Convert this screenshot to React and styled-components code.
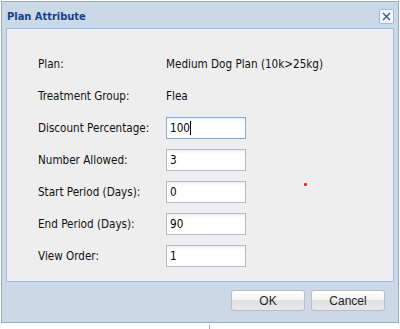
import React from 'react';
import styled, { createGlobalStyle } from 'styled-components';

const Global = createGlobalStyle`
  html, body { margin: 0; padding: 0; background: #ffffff; }
  body { font-family: "DejaVu Sans Condensed", "DejaVu Sans", sans-serif; }
`;

const Window = styled.div`
  position: relative;
  margin: 1px 0 0 1px;
  width: 398px;
  height: 322px;
  box-sizing: border-box;
  border: 1px solid #99a9c4;
  background: #cbd8e7;
  display: flex;
  flex-direction: column;
`;

const Header = styled.div`
  height: 26px;
  display: flex;
  align-items: center;
  justify-content: space-between;
  padding: 0 4px 0 5px;
`;

const Title = styled.div`
  font-weight: bold;
  font-size: 11px;
  color: #15428b;
  margin-top: 2px;
`;

const CloseButton = styled.div`
  width: 15px;
  height: 15px;
  box-sizing: border-box;
  border: 1px solid #99bbe8;
  border-radius: 2px;
  background: #f4f7fb;
  display: flex;
  align-items: center;
  justify-content: center;
  margin-top: 3px;
`;

const Frame = styled.div`
  padding: 0 4px;
`;

const Panel = styled.div`
  height: 254px;
  box-sizing: border-box;
  border: 1px solid #99bbe8;
  background: #eeeeee;
  padding: 19px 0 0 31px;
  display: flex;
  flex-direction: column;
`;

const Row = styled.div`
  height: 32px;
  display: flex;
  align-items: center;
  font-size: 11.6px;
  color: #111;
`;

const Label = styled.div`
  width: 128px;
`;

const Value = styled.div``;

const Field = styled.div`
  width: 80px;
  height: 22px;
  box-sizing: border-box;
  border: 1px solid ${p => (p.$focused ? '#7eadd9' : '#b5b8c8')};
  background: linear-gradient(#f0f0f0, #ffffff 4px);
  padding: 0 3px;
  display: flex;
  align-items: center;
  font-size: 11.6px;
  color: #000;
`;

const Caret = styled.span`
  display: inline-block;
  width: 1px;
  height: 14px;
  background: #000;
`;

const Footer = styled.div`
  flex: 1;
  display: flex;
  justify-content: flex-end;
  align-items: flex-start;
  gap: 6px;
  padding: 8px 13px 0 0;
`;

const Button = styled.div`
  width: 74px;
  height: 21px;
  box-sizing: border-box;
  border: 1px solid #bdbdbd;
  border-radius: 3px;
  background: linear-gradient(#ffffff, #f5f5f5 50%, #e1e1e1 50%, #e8e8e8);
  display: flex;
  align-items: center;
  justify-content: center;
  font-family: "Liberation Sans", Arial, sans-serif;
  font-size: 12px;
  color: #222;
`;

const Dot = styled.div`
  position: absolute;
  left: 302px;
  top: 181px;
  width: 3px;
  height: 3px;
  background: #ff2020;
  border-radius: 1px;
`;

const Divider = styled.div`
  margin: 2px 0 0 209px;
  height: 6px;
  border-left: 1px solid #a7a7a7;
`;

const rows = [
  { label: 'Plan:', value: 'Medium Dog Plan (10k>25kg)' },
  { label: 'Treatment Group:', value: 'Flea' },
  { label: 'Discount Percentage:', field: '100', focused: true },
  { label: 'Number Allowed:', field: '3' },
  { label: 'Start Period (Days):', field: '0' },
  { label: 'End Period (Days):', field: '90' },
  { label: 'View Order:', field: '1' },
];

export default function App() {
  return (
    <>
      <Global />
      <Window>
        <Header>
          <Title>Plan Attribute</Title>
          <CloseButton>
            <svg width="11" height="11" viewBox="0 0 11 11">
              <path d="M2 2 L9 9 M9 2 L2 9" stroke="#3a5a8f" strokeWidth="1.4" fill="none" />
            </svg>
          </CloseButton>
        </Header>
        <Frame>
          <Panel>
            {rows.map(r => (
              <Row key={r.label}>
                <Label>{r.label}</Label>
                {r.field !== undefined ? (
                  <Field $focused={r.focused}>
                    {r.field}
                    {r.focused && <Caret />}
                  </Field>
                ) : (
                  <Value>{r.value}</Value>
                )}
              </Row>
            ))}
          </Panel>
        </Frame>
        <Footer>
          <Button>OK</Button>
          <Button>Cancel</Button>
        </Footer>
        <Dot />
      </Window>
      <Divider />
    </>
  );
}
